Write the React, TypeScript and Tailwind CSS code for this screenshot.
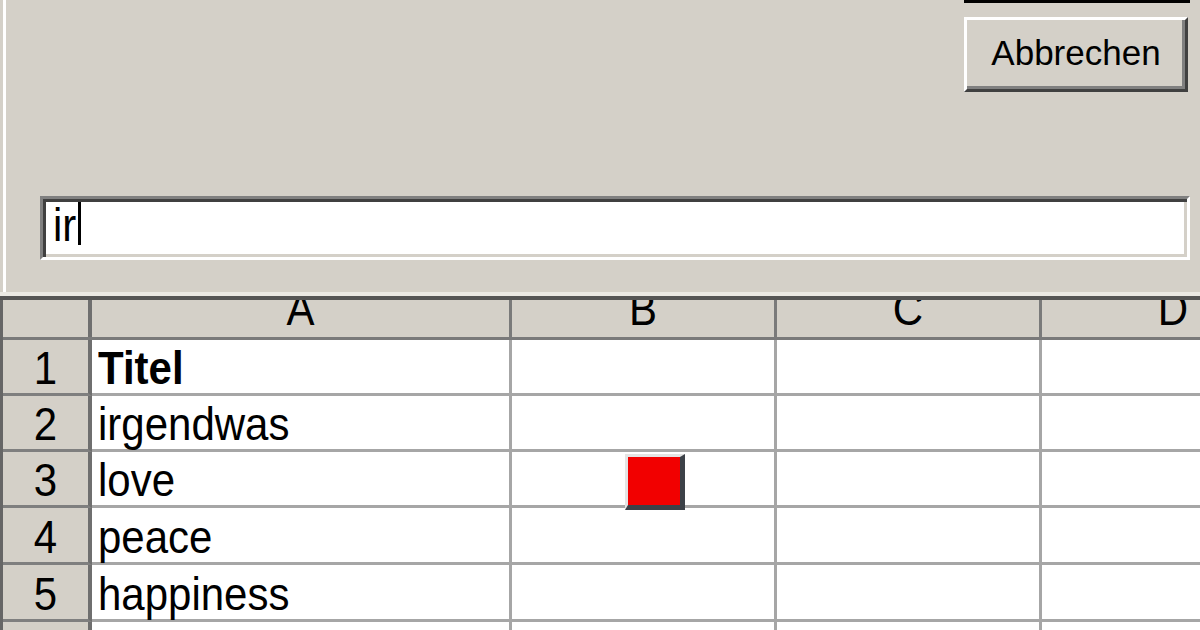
import React from "react";

const rows = [
  { n: "1", text: "Titel", bold: true, h: "h-[56px]" },
  { n: "2", text: "irgendwas", bold: false, h: "h-[56px]" },
  { n: "3", text: "love", bold: false, h: "h-[56px]" },
  { n: "4", text: "peace", bold: false, h: "h-[57px]" },
  { n: "5", text: "happiness", bold: false, h: "h-[57px]" },
  { n: "6", text: "", bold: false, h: "h-[56px]" },
];

function CellText({ children, bold }: { children: React.ReactNode; bold?: boolean }) {
  return (
    <span
      className={
        "inline-block scale-y-110 text-[42px] leading-none text-black " + (bold ? "font-bold" : "font-normal")
      }
    >
      {children}
    </span>
  );
}

function HeaderLetter({ letter, w }: { letter: string; w: string }) {
  return (
    <div className={`${w} h-full shrink-0 flex justify-center items-start overflow-hidden border-r-[3px] border-[#7a7a7a]`}>
      <span className="-mt-[11px] inline-block scale-y-110 text-[42px] leading-none text-black">{letter}</span>
    </div>
  );
}

export default function App() {
  return (
    <div
      className="w-[1200px] h-[630px] overflow-hidden bg-[#d4d0c8]"
      style={{ fontFamily: '"Liberation Sans", Arial, sans-serif' }}
    >
      {/* dialog part */}
      <div className="h-[292px] ml-[3px] border-l-[3px] border-white flex flex-col">
        <div className="flex justify-end pr-[10px]">
          <div className="w-[226px] h-[3px] bg-black" />
        </div>
        <div className="flex justify-end pr-[12px] mt-[14px]">
          <button className="w-[224px] h-[75px] bg-[#d4d0c8] border-[3px] border-t-white border-l-white border-r-[#404040] border-b-[#404040] shadow-[inset_-3px_-3px_0_#808080] flex items-center justify-center pb-[4px]">
            <span className="text-[35px] leading-none text-black">Abbrechen</span>
          </button>
        </div>
        <div className="mt-[104px] ml-[34px] w-[1150px] h-[64px] bg-white border-[3px] border-t-[#808080] border-l-[#808080] border-r-white border-b-white shadow-[inset_3px_3px_0_#404040,inset_-3px_-3px_0_#d4d0c8] flex items-end pl-[10px] pb-[10px]">
          <span className="inline-block scale-y-110 text-[42px] leading-none text-black">ir</span>
          <span className="w-[3px] h-[43px] bg-black ml-[2px] mb-[2px]" />
        </div>
      </div>
      <div className="h-[4px] bg-[#ebe9e4]" />
      <div className="h-[4px] bg-[#555555]" />

      {/* sheet */}
      <div className="border-l-[3px] border-[#666666]">
        <div className="flex h-[40px] bg-[#d4d0c8] border-b-[3px] border-[#7a7a7a]">
          <div className="w-[89px] h-full shrink-0 border-r-[4px] border-[#6f6f6f]" />
          <HeaderLetter letter="A" w="w-[420px]" />
          <HeaderLetter letter="B" w="w-[265px]" />
          <HeaderLetter letter="C" w="w-[265px]" />
          <HeaderLetter letter="D" w="w-[265px]" />
        </div>
        {rows.map((r) => (
          <div key={r.n} className={`flex ${r.h}`}>
            <div className="w-[89px] shrink-0 bg-[#d4d0c8] border-r-[4px] border-b-[3px] border-r-[#6f6f6f] border-b-[#7f7f7f] flex items-end justify-center pb-[3px]">
              <CellText>{r.n}</CellText>
            </div>
            <div className="w-[420px] shrink-0 bg-white border-r-[3px] border-b-[3px] border-[#a6a6a6] flex items-end pl-[6px] pb-[3px]">
              <CellText bold={r.bold}>{r.text}</CellText>
            </div>
            <div className="relative w-[265px] shrink-0 bg-white border-r-[3px] border-b-[3px] border-[#a6a6a6]">
              {r.n === "3" && (
                <div className="absolute left-[113px] top-[2px] z-10 w-[60px] h-[56px] bg-[#f20000] border-t-[3px] border-l-[3px] border-t-[#e4e4e4] border-l-[#e4e4e4] border-r-[5px] border-b-[5px] border-r-[#3c4148] border-b-[#3c4148]" />
              )}
            </div>
            <div className="w-[265px] shrink-0 bg-white border-r-[3px] border-b-[3px] border-[#a6a6a6]" />
            <div className="w-[265px] shrink-0 bg-white border-r-[3px] border-b-[3px] border-[#a6a6a6]" />
          </div>
        ))}
      </div>
    </div>
  );
}
